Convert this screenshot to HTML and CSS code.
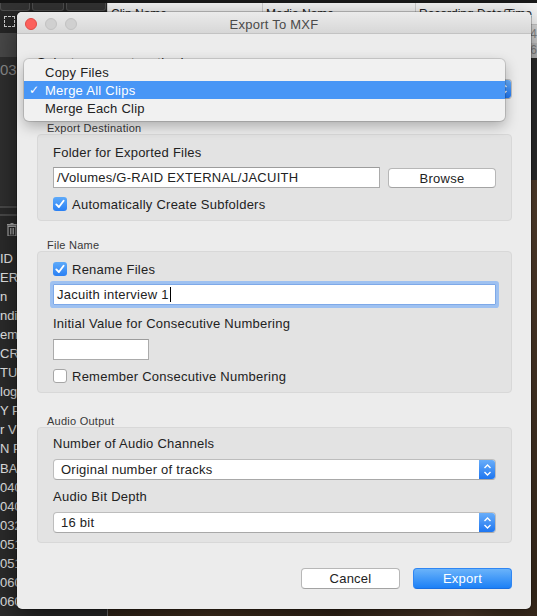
FILE: index.html
```html
<!DOCTYPE html>
<html>
<head>
<meta charset="utf-8">
<title>Export To MXF</title>
<link rel="stylesheet" href="styles.css">
</head>
<body>
<div class="desktop">
  <div class="app">
    <div class="side">
      <div class="side-toolbar">
        <div class="tb-buttons">
          <div class="tb-btn w1"></div>
          <div class="tb-btn w2"></div>
          <div class="tb-btn w3"></div>
        </div>
        <div class="dotted"></div>
      </div>
      <div class="side-band"></div>
      <div class="side-panel">03</div>
      <div class="side-sep"></div>
      <div class="side-tools">
        <svg class="trash" width="10" height="13" viewBox="0 0 10 13"><rect x="0" y="1" width="10" height="1.6" fill="#a8a8a8"/><rect x="3.5" y="0" width="3" height="1.5" fill="#a8a8a8"/><path d="M1 3.5h8v9.5h-8z" fill="none" stroke="#a8a8a8" stroke-width="1.2"/><path d="M3.5 5v6.5M5 5v6.5M6.5 5v6.5" stroke="#a8a8a8" stroke-width="0.9"/></svg>
      </div>
      <div class="side-list">
        <div>ID</div><div>ERE</div><div>n</div><div>ndit</div><div>emi</div><div>CRA</div><div>TUP</div><div>log</div><div>Y P</div><div>r VI</div><div>N PI</div><div>BAC</div><div>040</div><div>040</div><div>032</div><div>051</div><div>051</div><div>060</div><div>060</div><div>0074800-49</div>
      </div>
    </div>
    <div class="main">
      <div class="main-top"></div>
      <div class="header">
        <div class="hcell hcell-sort"><span>Clip Name</span><span class="sort">&#8964;</span></div>
        <div class="hcell">Media Name</div>
        <div class="hcell">Recording Date/Time</div>
      </div>
      <div class="row-a"><span>4</span></div>
      <div class="row-b"><span>6</span></div>
      <div class="viewer"></div>
      <div class="photo"></div>
    </div>
  </div>

  <div class="dialog">
    <div class="titlebar">
      <div class="lights">
        <span class="light red"></span>
        <span class="light"></span>
        <span class="light"></span>
      </div>
      <div class="title">Export To MXF</div>
      <div></div>
    </div>
    <div class="content">
      <div class="label">Select an export method:</div>
      <div class="popup popup-wide">
        <div class="popup-text">Merge All Clips</div>
        <div class="popup-arrows">
          <svg width="9" height="14" viewBox="0 0 9 14"><path d="M1.5 5L4.5 2L7.5 5M1.5 9L4.5 12L7.5 9" fill="none" stroke="#fff" stroke-width="1.4"/></svg>
        </div>
      </div>

      <div class="sec-label sec-first">Export Destination</div>
      <div class="group">
        <div class="label">Folder for Exported Files</div>
        <div class="field-row">
          <div class="field field-path">/Volumes/G-RAID EXTERNAL/JACUITH</div>
          <div class="btn browse">Browse</div>
        </div>
        <div class="check-row">
          <span class="checkbox checked"><svg width="14" height="14" viewBox="0 0 14 14"><path d="M3.3 7.4L5.9 10L10.6 3.8" fill="none" stroke="#fff" stroke-width="1.9" stroke-linecap="round" stroke-linejoin="round"/></svg></span>
          <span>Automatically Create Subfolders</span>
        </div>
      </div>

      <div class="sec-label sec-mid">File Name</div>
      <div class="group">
        <div class="check-row">
          <span class="checkbox checked"><svg width="14" height="14" viewBox="0 0 14 14"><path d="M3.3 7.4L5.9 10L10.6 3.8" fill="none" stroke="#fff" stroke-width="1.9" stroke-linecap="round" stroke-linejoin="round"/></svg></span>
          <span>Rename Files</span>
        </div>
        <div class="field focus">Jacuith interview 1<span class="caret"></span></div>
        <div class="label label-gap">Initial Value for Consecutive Numbering</div>
        <div class="field field-small"></div>
        <div class="check-row">
          <span class="checkbox"></span>
          <span>Remember Consecutive Numbering</span>
        </div>
      </div>

      <div class="sec-label sec-audio">Audio Output</div>
      <div class="group group-audio">
        <div class="label">Number of Audio Channels</div>
        <div class="popup popup-in">
          <div class="popup-text">Original number of tracks</div>
          <div class="popup-arrows">
            <svg width="9" height="14" viewBox="0 0 9 14"><path d="M1.5 5L4.5 2L7.5 5M1.5 9L4.5 12L7.5 9" fill="none" stroke="#fff" stroke-width="1.4"/></svg>
          </div>
        </div>
        <div class="label label-gap2">Audio Bit Depth</div>
        <div class="popup popup-in">
          <div class="popup-text">16 bit</div>
          <div class="popup-arrows">
            <svg width="9" height="14" viewBox="0 0 9 14"><path d="M1.5 5L4.5 2L7.5 5M1.5 9L4.5 12L7.5 9" fill="none" stroke="#fff" stroke-width="1.4"/></svg>
          </div>
        </div>
      </div>

      <div class="actions">
        <div class="btn action">Cancel</div>
        <div class="btn action primary">Export</div>
      </div>
    </div>

    <div class="menu">
      <div class="menu-item">Copy Files</div>
      <div class="menu-item selected"><span class="check">&#10003;</span>Merge All Clips</div>
      <div class="menu-item">Merge Each Clip</div>
    </div>
  </div>
</div>
</body>
</html>
```

FILE: styles.css
```css
* { box-sizing: border-box; }
body {
  margin: 0;
  font-family: "Liberation Sans", Arial, sans-serif;
}
.desktop {
  position: relative;
  width: 537px;
  height: 616px;
  overflow: hidden;
  background: #2a2a2a;
}
.app {
  display: grid;
  grid-template-columns: 107px 1fr;
  height: 100%;
}

/* background app: left side */
.side {
  display: flex;
  flex-direction: column;
  background: #2d2d2d;
}
.side-toolbar {
  height: 33px;
  background: #262626;
  border-top: 3px solid #151515;
}
.tb-buttons {
  display: flex;
  gap: 2px;
  height: 8px;
}
.tb-btn {
  background: #333;
  border: 1px solid #4e4e4e;
  border-top: none;
  border-radius: 0 0 3px 3px;
}
.tb-btn.w1 { width: 30px; }
.tb-btn.w2 { width: 32px; }
.tb-btn.w3 { width: 40px; }
.dotted {
  width: 11px;
  height: 11px;
  border: 1px dashed #cfcfcf;
  margin: 5px 0 0 4px;
}
.side-band {
  height: 24px;
  background: #4a4a4a;
}
.side-panel {
  height: 148px;
  background: #303030;
  color: #8e8e8e;
  font-size: 15px;
  line-height: 18px;
  padding-top: 4px;
}
.side-sep {
  height: 10px;
  background: #2b2b2b;
  border-top: 2px solid #4a4a4a;
  border-bottom: 2px solid #4a4a4a;
  margin-top: 1px;
}
.side-tools {
  height: 24px;
  background: #2a2a2a;
  padding: 7px 0 0 7px;
}
.trash { display: block; }
.side-list {
  flex: 1;
  padding-top: 9px;
  color: #ececec;
  font-size: 13px;
  line-height: 19.05px;
  white-space: nowrap;
  background: #2c2c2c;
}

/* background app: right side */
.main {
  display: flex;
  flex-direction: column;
  min-width: 0;
}
.main-top {
  height: 3px;
  background: #1a1a1a;
}
.header {
  height: 22px;
  background: #f7f7f7;
  display: grid;
  grid-template-columns: 155px 153px 1fr;
  border-bottom: 1px solid #c8c8c8;
}
.hcell {
  border-left: 1px solid #d2d2d2;
  padding-left: 3px;
  font-size: 12px;
  line-height: 22px;
  color: #222;
  white-space: nowrap;
  overflow: hidden;
}
.hcell-sort {
  display: flex;
  justify-content: space-between;
  padding-right: 3px;
}
.sort { color: #666; font-size: 10px; }
.row-a {
  height: 18px;
  background: #dcdcdc;
  text-align: right;
  font-size: 12px;
  line-height: 18px;
  color: #8a8a8a;
}
.row-b {
  height: 15px;
  background: #c9c9c9;
  text-align: right;
  font-size: 12px;
  line-height: 15px;
  color: #8a8a8a;
}
.viewer {
  height: 122px;
  background: #2e2e2e;
}
.photo {
  flex: 1;
  border-left: 1px solid #7a7a7a;
  background: linear-gradient(100deg, #2b2117 0%, #4a3522 35%, #3a2a1b 60%, #5a4330 85%, #3a2b1c 100%);
}

/* dialog window */
.dialog {
  position: absolute;
  left: 17px;
  top: 12px;
  width: 514px;
  height: 597px;
  background: #ececec;
  border-radius: 5px;
  box-shadow: 0 0 0 1px rgba(0, 0, 0, 0.22), 0 10px 30px rgba(0, 0, 0, 0.55);
  display: flex;
  flex-direction: column;
}
.titlebar {
  flex: none;
  height: 22px;
  background: linear-gradient(#ebebeb, #d7d7d7);
  border-bottom: 1px solid #c3c3c3;
  border-radius: 5px 5px 0 0;
  display: grid;
  grid-template-columns: 1fr auto 1fr;
  align-items: center;
}
.lights {
  display: flex;
  gap: 8px;
  padding-left: 8px;
}
.light {
  width: 12px;
  height: 12px;
  border-radius: 50%;
  background: #d0d0d0;
  border: 1px solid #c2c2c2;
}
.light.red {
  background: #fc605c;
  border-color: #df4b46;
}
.title {
  font-size: 13px;
  letter-spacing: 0.25px;
  color: #4a4a4a;
  line-height: 21px;
  padding-top: 2px;
}
.content {
  flex: 1;
  display: flex;
  flex-direction: column;
  padding: 20px 19px 0 20px;
  font-size: 13px;
  letter-spacing: 0.25px;
  color: #222;
}
.label {
  line-height: 16px;
  padding-top: 1px;
  margin-bottom: -1px;
  white-space: nowrap;
}
.label-gap { margin-top: 10px; }
.label-gap2 { margin-top: 8px; }

.popup {
  height: 20px;
  display: flex;
  background: #fff;
  border: 1px solid #bdbdbd;
  border-bottom-color: #a8a8a8;
  border-radius: 4px;
  overflow: hidden;
}
.popup-wide { margin-top: 9px; }
.popup-in { margin-top: 8px; height: 21px; }
.popup-text {
  flex: 1;
  padding-left: 7px;
  line-height: 19px;
  white-space: nowrap;
}
.popup-arrows {
  width: 17px;
  margin: -1px -1px -1px 0;
  background: linear-gradient(#6cb0fa, #1a73f0);
  display: flex;
  align-items: center;
  justify-content: center;
}
.popup-arrows svg { display: block; }

.sec-label {
  font-size: 11px;
  line-height: 14px;
  padding-left: 10px;
  padding-top: 1px;
  margin-bottom: -1px;
  color: #383838;
}
.sec-first { margin-top: 21px; }
.sec-mid { margin-top: 16px; }
.sec-audio { margin-top: 20px; }

.group {
  background: #e3e3e3;
  border: 1px solid #d8d8d8;
  border-radius: 4px;
  padding: 9px 15px 8px;
}
.group-audio { padding: 7px 15px 9px; }

.field-row {
  display: flex;
  align-items: center;
  gap: 8px;
  margin-top: 7px;
}
.field {
  height: 21px;
  background: #fff;
  border: 1px solid #ababab;
  border-top-color: #9c9c9c;
  padding-left: 3px;
  line-height: 20px;
  white-space: nowrap;
  overflow: hidden;
}
.field-path { width: 327px; }
.focus {
  margin-top: 7px;
  border-color: #7ea9e8;
  border-radius: 1px;
  box-shadow: 0 0 0 3px #9ec1f1;
}
.caret {
  display: inline-block;
  width: 1px;
  height: 15px;
  background: #000;
  vertical-align: -3px;
  margin-left: 1px;
}
.field-small {
  width: 96px;
  margin-top: 8px;
}

.btn {
  background: #fff;
  border: 1px solid #b7b7b7;
  border-bottom-color: #a3a3a3;
  border-radius: 4px;
  text-align: center;
  line-height: 19px;
  height: 20px;
}
.browse {
  width: 108px;
}

.check-row {
  display: flex;
  align-items: center;
  gap: 5px;
  height: 16px;
  margin-top: 8px;
  white-space: nowrap;
}
.check-row > span:last-child { padding-top: 1px; }
.group > .check-row:first-child { margin-top: 0; }
.checkbox {
  width: 14px;
  height: 14px;
  flex: none;
  border-radius: 3px;
  background: #fff;
  border: 1px solid #a6a6a6;
}
.checkbox.checked {
  border: none;
  background: linear-gradient(#5eaaf9, #2a80f4);
}
.checkbox svg { display: block; }

.actions {
  display: flex;
  justify-content: flex-end;
  gap: 13px;
  margin-top: 25px;
}
.action {
  width: 99px;
  height: 21px;
  line-height: 20px;
}
.primary {
  color: #fff;
  border: 1px solid #2f86f3;
  border-bottom-color: #1a6fe0;
  background: linear-gradient(#6ab3fa, #1c80f6);
}

/* open popup menu */
.menu {
  position: absolute;
  left: 7px;
  top: 47px;
  width: 481px;
  padding: 4px 0;
  background: #f1f1f1;
  border-radius: 5px;
  box-shadow: 0 0 0 1px rgba(0, 0, 0, 0.13), 0 5px 14px rgba(0, 0, 0, 0.28);
  font-size: 13px;
  letter-spacing: 0.25px;
  color: #222;
}
.menu-item {
  position: relative;
  height: 18px;
  line-height: 19px;
  padding-left: 21px;
}
.menu-item.selected {
  background: #4896f6;
  color: #fff;
}
.check {
  position: absolute;
  left: 5px;
  top: 0;
  font-family: "DejaVu Sans", sans-serif;
  font-size: 12px;
}
```
